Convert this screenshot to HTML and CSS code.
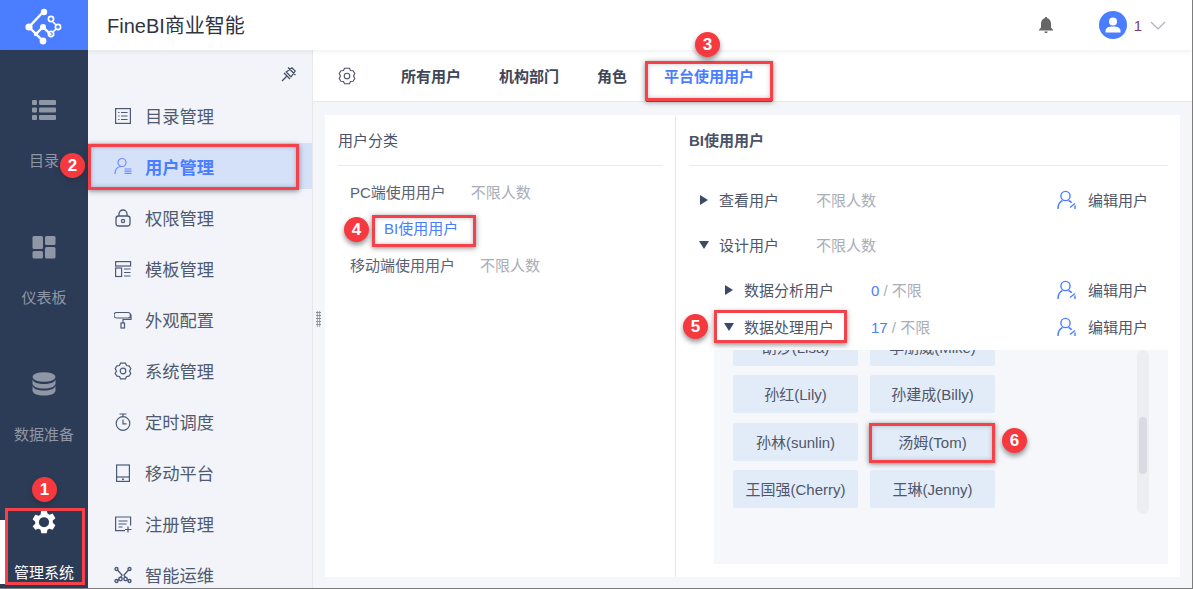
FILE: index.html
```html
<!DOCTYPE html>
<html lang="zh">
<head>
<meta charset="utf-8">
<title>FineBI商业智能</title>
<link rel="stylesheet" href="styles.css">
</head>
<body>
<div class="page">
  <header class="topbar">
    <div class="logo">
      <svg width="44" height="44" viewBox="0 0 44 44" class="logo-svg">
        <g fill="none" stroke="#fff" stroke-width="2.4">
          <path d="M22 6 7 22l14 14M14 29l7-7 8 8"/>
        </g>
        <g fill="#fff"><circle cx="22" cy="7" r="3.2"/><circle cx="7" cy="22" r="3.6"/><circle cx="21" cy="22" r="3"/><circle cx="21" cy="36" r="3.4"/><circle cx="14" cy="29" r="2.2"/></g>
        <g fill="none" stroke="#fff" stroke-width="1.7"><path d="M31 17l3 3M31 27l3-3"/><circle cx="29" cy="14" r="2.6"/><circle cx="36" cy="22" r="2.6"/><circle cx="29" cy="29" r="2.6"/></g>
      </svg>
    </div>
    <div class="brand">FineBI商业智能</div>
    <div class="top-actions">
      <svg class="bell" width="16" height="18" viewBox="0 0 16 18"><path fill="#666" d="M8 1c.8 0 1.2.5 1.3 1.2C12 3 13 5.200 13 8v3.500l2 2.200v.8H1v-.8l2-2.200V8c0-2.800 1-5 3.700-5.800C6.800 1.500 7.200 1 8 1zM6.300 15.500h3.400C9.600 16.500 8.900 17 8 17s-1.600-.5-1.700-1.500z"/></svg>
      <span class="avatar"><svg width="18" height="18" viewBox="0 0 18 18"><circle cx="9" cy="5.500" r="4" fill="#fff"/><path fill="#fff" d="M1.500 16.500v-1.800c0-2.700 3-4.200 7.500-4.200s7.500 1.500 7.500 4.200v1.800z"/></svg></span>
      <span class="user-id">1</span>
      <svg class="chev" width="16" height="9" viewBox="0 0 16 9"><path d="M1 1l7 7 7-7" fill="none" stroke="#aeb1b8" stroke-width="1.200"/></svg>
    </div>
  </header>

  <div class="body">
    <nav class="rail">
      <div class="rail-item">
        <svg width="24" height="24" viewBox="0 0 24 24" class="rail-ico"><g fill="currentColor"><rect y="2" width="5" height="5" rx="1"/><rect x="7" y="2" width="17" height="5" rx="1"/><rect y="9.500" width="5" height="5" rx="1"/><rect x="7" y="9.500" width="17" height="5" rx="1"/><rect y="17" width="5" height="5" rx="1"/><rect x="7" y="17" width="17" height="5" rx="1"/></g></svg>
        <span class="rail-label">目录</span>
      </div>
      <div class="rail-item">
        <svg width="24" height="24" viewBox="0 0 24 24" class="rail-ico"><g fill="currentColor"><rect x="0.500" y="1" width="10.500" height="13" rx="1.500"/><rect x="13" y="1" width="10.500" height="9" rx="1.500"/><rect x="0.500" y="16" width="10.500" height="7.500" rx="1.500"/><rect x="13" y="12" width="10.500" height="11.500" rx="1.500"/></g></svg>
        <span class="rail-label">仪表板</span>
      </div>
      <div class="rail-item">
        <svg width="24" height="24" viewBox="0 0 24 24" class="rail-ico"><g fill="currentColor"><ellipse cx="12" cy="5" rx="11.500" ry="4.800"/><path d="M.5 7.500c1 3 5.500 4.500 11.500 4.500s10.500-1.500 11.500-4.500v4c0 3-5 5-11.500 5S.5 14.500.5 11.500z"/><path d="M.5 14c1 3 5.500 4.500 11.500 4.500S22.500 17 23.500 14v4.500c0 3-5 5-11.500 5S.5 21.500.5 18.500z"/></g></svg>
        <span class="rail-label">数据准备</span>
      </div>
      <div class="rail-item is-active">
        <svg width="26" height="26" viewBox="0 0 24 24" class="rail-ico gear-white"><path fill="currentColor" fill-rule="evenodd" d="M9.500 1h5l.7 3.200 1.700 1 3.100-1 2.500 4.300-2.400 2.200v2l2.400 2.200-2.500 4.300-3.100-1-1.700 1-.7 3.200h-5l-.7-3.200-1.700-1-3.100 1L1.500 15.900l2.400-2.200v-2L1.500 9.500 4 5.200l3.100 1 1.700-1zM12 7.500a4.700 4.700 0 1 0 0 9.400 4.700 4.700 0 0 0 0-9.400z"/></svg>
        <span class="rail-label">管理系统</span>
      </div>
    </nav>

    <aside class="side">
      <div class="pin-row">
        <svg width="18" height="18" viewBox="0 0 18 18"><g fill="none" stroke="#3f4a5e" stroke-width="1.200"><path d="M8 2.500l7.500 7.500M12 2.800 15.200 6 11 11.800 6.200 7z"/><path d="M4 8l6 6M6.500 11.500 2 16"/></g></svg>
      </div>
      <ul class="menu">
        <li class="menu-item"><svg class="mi" width="18" height="18" viewBox="0 0 18 18"><g fill="none" stroke="currentColor" stroke-width="1.200"><rect x="1.600" y="1.600" width="14.800" height="14.800"/><path d="M7 5.500h6.500M7 9h6.500M7 12.500h6.500M4.200 5.500h1.300M4.200 9h1.300M4.200 12.500h1.300"/></g></svg>目录管理</li>
        <li class="menu-item is-active"><svg class="mi" width="18" height="18" viewBox="0 0 18 18"><g fill="none" stroke="currentColor" stroke-width="1.200"><circle cx="8" cy="5.500" r="4"/><path d="M1 17c0-4.500 2.500-7.200 6-7.500M10.500 12h7M10.500 14.200h7M10.500 16.400h7"/></g></svg>用户管理</li>
        <li class="menu-item"><svg class="mi" width="18" height="18" viewBox="0 0 18 18"><g fill="none" stroke="currentColor" stroke-width="1.300"><rect x="2" y="7" width="14" height="10" rx="2.500"/><path d="M5 7V5a4 4 0 0 1 8 0v2"/><circle cx="9" cy="12" r="1.600"/></g></svg>权限管理</li>
        <li class="menu-item"><svg class="mi" width="18" height="18" viewBox="0 0 18 18"><g fill="none" stroke="currentColor" stroke-width="1.200"><rect x="1.600" y="1.600" width="15" height="4.400"/><rect x="1.600" y="8" width="6" height="8.500"/><path d="M10 9h6.500M10 12.500h6.500M10 16h6.500"/></g></svg>模板管理</li>
        <li class="menu-item"><svg class="mi" width="18" height="18" viewBox="0 0 18 18"><g fill="none" stroke="currentColor" stroke-width="1.200"><path d="M2.500 1.500h11.500a1.500 1.500 0 0 1 0 5.500H3a1.500 1.500 0 0 1-.5-5.500zM15.500 4h1.500v4.500H9V12"/><rect x="7" y="12" width="3.500" height="5"/></g></svg>外观配置</li>
        <li class="menu-item"><svg class="mi" width="18" height="18" viewBox="0 0 18 18"><g fill="none" stroke="currentColor" stroke-width="1.200"><path d="M6.500 1.200h5l1 2.300 2.500.3 1.800 2.700-1.300 2.500 1.300 2.500-1.800 2.700-2.500.3-1 2.300h-5l-1-2.300-2.500-.3L1.200 11.500 2.500 9 1.200 6.500 3 3.800l2.500-.3z"/><circle cx="9" cy="9" r="2.800"/></g></svg>系统管理</li>
        <li class="menu-item"><svg class="mi" width="18" height="18" viewBox="0 0 18 18"><g fill="none" stroke="currentColor" stroke-width="1.200"><circle cx="9" cy="10.500" r="6.800"/><path d="M5.500 1h7M9 1v2.700M9 6.500v4.300h3.500"/></g></svg>定时调度</li>
        <li class="menu-item"><svg class="mi" width="18" height="18" viewBox="0 0 18 18"><g fill="none" stroke="currentColor" stroke-width="1.200"><rect x="2.600" y="1" width="12.800" height="16.400"/><path d="M2.600 13h12.800"/></g><circle cx="9" cy="15.200" r="1" fill="currentColor"/></svg>移动平台</li>
        <li class="menu-item"><svg class="mi" width="18" height="18" viewBox="0 0 18 18"><g fill="none" stroke="currentColor" stroke-width="1.200"><path d="M11 15.600H1.600V2h15v8.500M4.500 6h9M4.500 9h8M4.500 12h4M14 11.500v6M11 14.500h6.500"/></g></svg>注册管理</li>
        <li class="menu-item"><svg class="mi" width="18" height="18" viewBox="0 0 18 18"><g fill="none" stroke="currentColor" stroke-width="1.400"><circle cx="2.500" cy="3" r="1.500"/><circle cx="15.500" cy="3" r="1.500"/><circle cx="2.500" cy="15" r="1.500"/><circle cx="15.500" cy="15" r="1.500"/><circle cx="6.500" cy="13" r="1.700"/><circle cx="11.500" cy="13" r="1.700"/><path d="M3.500 4l4.500 5-1.200 2.500M14.500 4 10 9l1.200 2.500M3.500 14l1.500-.7M14.500 14l-1.500-.7"/></g></svg>智能运维</li>
      </ul>
    </aside>

    <main class="main">
      <div class="tabs">
        <svg class="tab-gear" width="18" height="18" viewBox="0 0 18 18"><g fill="none" stroke="#4a5268" stroke-width="1.100"><path d="M6.500 1.200h5l1 2.300 2.500.3 1.800 2.700-1.300 2.500 1.300 2.500-1.800 2.700-2.500.3-1 2.300h-5l-1-2.300-2.500-.3L1.200 11.500 2.500 9 1.200 6.500 3 3.800l2.500-.3z"/><circle cx="9" cy="9" r="2.800"/></g></svg>
        <span class="tab">所有用户</span>
        <span class="tab">机构部门</span>
        <span class="tab">角色</span>
        <span class="tab is-active">平台使用用户</span>
      </div>
      <div class="content">
        <section class="card card-left">
          <h2 class="card-title">用户分类</h2>
          <ul class="cat-list">
            <li class="cat"><span>PC端使用用户</span><span class="muted">不限人数</span></li>
            <li class="cat is-active"><span>BI使用用户</span></li>
            <li class="cat"><span>移动端使用用户</span><span class="muted">不限人数</span></li>
          </ul>
        </section>
        <section class="card card-right">
          <h2 class="card-title strong">BI使用用户</h2>
          <div class="rows">
            <div class="row"><i class="caret right"></i><span class="row-label">查看用户</span><span class="muted">不限人数</span><span class="edit"><svg width="20" height="20" viewBox="0 0 20 20"><use href="#edit-user"/></svg>编辑用户</span></div>
            <div class="row"><i class="caret down"></i><span class="row-label">设计用户</span><span class="muted">不限人数</span></div>
            <div class="row sub"><i class="caret right"></i><span class="row-label">数据分析用户</span><span class="muted"><b class="num">0</b> / 不限</span><span class="edit"><svg width="20" height="20" viewBox="0 0 20 20"><use href="#edit-user"/></svg>编辑用户</span></div>
            <div class="row sub last"><i class="caret down"></i><span class="row-label">数据处理用户</span><span class="muted"><b class="num">17</b> / 不限</span><span class="edit"><svg width="20" height="20" viewBox="0 0 20 20"><use href="#edit-user"/></svg>编辑用户</span></div>
          </div>
          <div class="chip-panel">
            <div class="chips">
              <span class="chip">胡莎(Lisa)</span><span class="chip">李朋威(Mike)</span>
              <span class="chip">孙红(Lily)</span><span class="chip">孙建成(Billy)</span>
              <span class="chip">孙林(sunlin)</span><span class="chip">汤姆(Tom)</span>
              <span class="chip">王国强(Cherry)</span><span class="chip">王琳(Jenny)</span>
            </div>
            <div class="scroll-track"><div class="scroll-thumb"></div></div>
          </div>
        </section>
      </div>
    </main>
  </div>

  <svg class="defs" width="0" height="0"><defs><g id="edit-user" fill="none" stroke="#4a7dff" stroke-width="1.400"><circle cx="8.500" cy="6" r="4.600"/><path d="M1 19c0-4.500 1.800-7.300 4.500-8.500M11.500 10.500c1.200.5 2.400 1.300 3.200 2.300M13 17.500l5-4M18 15.500V19"/></g></defs></svg>

  <div class="grip"></div>
  <div class="edge-patch"></div>
  <div class="mark mark-1"></div>
  <div class="mark mark-2"></div>
  <div class="mark mark-3"></div>
  <div class="mark mark-4"></div>
  <div class="mark mark-5"></div>
  <div class="mark mark-6"></div>
  <span class="badge badge-1">1</span>
  <span class="badge badge-2">2</span>
  <span class="badge badge-3">3</span>
  <span class="badge badge-4">4</span>
  <span class="badge badge-5">5</span>
  <span class="badge badge-6">6</span>
</div>
</body>
</html>
```
FILE: styles.css
```css
* { box-sizing: border-box; }
html, body { margin: 0; padding: 0; }
body {
  font-family: "Liberation Sans", "Noto Sans CJK SC", sans-serif;
  color: #4a5268;
  font-size: 15px;
}
ul { list-style: none; margin: 0; padding: 0; }
h2 { margin: 0; font-weight: 400; }

.page {
  position: relative;
  width: 1193px;
  height: 589px;
  overflow: hidden;
  background: #f5f6f9;
  display: flex;
  flex-direction: column;
  border-right: 1px solid #7d7d7d;
  border-bottom: 1px solid #7d7d7d;
}
.defs { position: absolute; }

.topbar {
  height: 50px;
  flex: none;
  display: flex;
  align-items: center;
  background: #fff;
  box-shadow: 0 2px 4px rgba(60, 70, 90, .07);
  position: relative;
  z-index: 2;
}
.logo {
  width: 88px;
  height: 50px;
  background: #4a7dff;
  display: flex;
  align-items: center;
  justify-content: center;
}
.logo-svg { margin-top: 3px; }
.brand {
  margin-left: 19px;
  padding-bottom: 1px;
  font-size: 20px;
  color: #2f3440;
}
.top-actions {
  margin-left: auto;
  display: flex;
  align-items: center;
  padding-right: 26px;
}
.bell { margin-right: 45px; }
.avatar {
  width: 28px;
  height: 28px;
  border-radius: 50%;
  background: #4a7dff;
  display: flex;
  align-items: center;
  justify-content: center;
  margin-right: 7px;
}
.user-id { color: #7a3f78; font-size: 15px; margin-right: 8px; }

.body { flex: 1; display: flex; min-height: 0; }

.rail {
  width: 88px;
  flex: none;
  background: #2c3c57;
  display: flex;
  flex-direction: column;
}
.rail-item {
  height: 137px;
  flex: none;
  padding-top: 48px;
  display: flex;
  flex-direction: column;
  align-items: center;
  color: #8f96a5;
}
.rail-ico { display: block; flex: none; }
.rail-label { margin-top: 27px; font-size: 15px; line-height: 24px; white-space: nowrap; }
.rail-item.is-active { color: #fff; padding-top: 48px; }
.rail-item.is-active .rail-label { margin-top: 26px; }

.side {
  width: 225px;
  flex: none;
  background: #f2f4f9;
  border-right: 1px solid #e6e8ee;
  overflow: hidden;
}
.pin-row {
  height: 40px;
  display: flex;
  justify-content: flex-end;
  align-items: flex-end;
  padding: 0 14px 7px 0;
}
.menu-item {
  height: 51px;
  padding-left: 26px;
  display: flex;
  align-items: center;
  font-size: 17.300px;
  color: #4f5a70;
  white-space: nowrap;
}
.mi { margin-right: 13px; flex: none; color: #4a5a78; }
.menu-item.is-active {
  height: 46px;
  margin: 2px 0 3px;
  background: #d5e1f8;
  color: #4a7dff;
  font-weight: 700;
}
.menu-item.is-active .mi { color: #6f8cff; }

.main { flex: 1; min-width: 0; display: flex; flex-direction: column; }
.tabs {
  height: 52px;
  flex: none;
  background: #fff;
  border-bottom: 1px solid #e6e8ee;
  display: flex;
  align-items: center;
  padding-left: 25px;
  font-size: 15px;
  font-weight: 700;
  color: #3e4658;
}
.tab-gear { margin-right: 45px; }
.tab { margin-right: 38px; white-space: nowrap; }
.tab.is-active {
  align-self: stretch;
  display: flex;
  align-items: center;
  margin: 0 0 0 -19px;
  padding: 0 18px;
  color: #4a7dff;
  box-shadow: 0 1px 0 #3f6fe0;
}
.content {
  flex: 1;
  min-height: 0;
  display: flex;
  padding: 13px 12px 11px 12px;
}
.card { background: #fff; }
.card-left { width: 351px; padding: 0 12px 0 13px; border-right: 1px solid #e6e8ee; flex: none; }
.card-right { flex: 1; min-width: 0; padding: 0 12px 0 13px; }
.card-title {
  height: 51px;
  padding-top: 1px;
  line-height: 50px;
  font-size: 15px;
  color: #4a5268;
  border-bottom: 1px solid #e8eaee;
}
.card-title.strong { font-weight: 700; }
.muted { color: #a8adb8; white-space: nowrap; }

.cat-list { padding: 7px 0 0 12px; }
.cat { height: 36.500px; display: flex; align-items: center; gap: 25px; font-size: 15px; color: #5a6274; }
.cat.is-active { color: #4a7dff; padding-left: 34px; }

.rows { padding-top: 11px; }
.row {
  height: 45px;
  display: flex;
  align-items: center;
  padding-left: 10px;
  font-size: 15px;
  color: #4f5669;
}
.row.sub { padding-left: 35px; }
.row.last { height: 29px; margin-bottom: 9px; }
.caret { width: 0; height: 0; flex: none; margin-right: 11px; border-style: solid; border-color: transparent; }
.caret.right { border-width: 5.500px 0 5.500px 8px; border-left-color: #3d4a66; margin-left: 1px; }
.caret.down { border-width: 8px 5.500px 0 5.500px; border-top-color: #3d4a66; margin-right: 10px; }
.row-label { width: 97px; flex: none; white-space: nowrap; }
.row.sub .row-label { width: 127px; }
.num { color: #4a7dff; font-weight: 400; }
.edit {
  margin-left: auto;
  margin-right: 20px;
  display: flex;
  align-items: center;
  gap: 11px;
  white-space: nowrap;
}

.chip-panel {
  position: relative;
  margin-left: 25px;
  height: 214px;
  background: #f6f7fa;
  overflow: hidden;
}
.chips {
  display: grid;
  grid-template-columns: 125px 125px;
  grid-auto-rows: 38px;
  column-gap: 12px;
  row-gap: 9.500px;
  padding-left: 19px;
  margin-top: -22.500px;
}
.chip {
  background: #e2ecf9;
  border-radius: 2px;
  padding-bottom: 1px;
  display: flex;
  align-items: center;
  justify-content: center;
  font-size: 15px;
  color: #4f5669;
  white-space: nowrap;
}
.scroll-track {
  position: absolute;
  right: 19px;
  top: 0;
  width: 12px;
  height: 164px;
  border-radius: 6px;
  background: #eceef2;
}
.scroll-thumb {
  position: absolute;
  left: 2px;
  top: 67px;
  width: 8px;
  height: 57px;
  border-radius: 4px;
  background: #d8dbe1;
}

.grip {
  position: absolute;
  left: 316px;
  top: 311px;
  width: 5px;
  height: 16px;
  background-image: radial-gradient(circle, #8a8f99 1px, transparent 1.100px);
  background-size: 2.500px 3px;
}
.edge-patch {
  position: absolute;
  left: 0;
  top: 520px;
  width: 5px;
  height: 64px;
  background: #fff;
}
.mark {
  position: absolute;
  z-index: 3;
  border: 3px solid #f5424a;
  box-shadow: 0 1px 5px rgba(40, 40, 50, .55), inset 0 0 4px rgba(40, 40, 50, .3);
}
.mark-1 { left: 5px; top: 508px; width: 80px; height: 77px; box-shadow: none; }
.mark-2 { left: 88px; top: 144px; width: 211px; height: 46px; }
.mark-3 { left: 645px; top: 61px; width: 128px; height: 40px; }
.mark-4 { left: 372px; top: 215px; width: 104px; height: 32px; }
.mark-5 { left: 714px; top: 310px; width: 133px; height: 33px; box-shadow: 0 2px 5px rgba(40, 40, 50, .5); }
.mark-6 { left: 869px; top: 423px; width: 126px; height: 40px; }
.badge {
  position: absolute;
  z-index: 4;
  width: 25px;
  height: 25px;
  border-radius: 50%;
  background: #f5393f;
  color: #fff;
  font-size: 17px;
  font-weight: 700;
  line-height: 25px;
  text-align: center;
  box-shadow: 0 3px 5px rgba(40, 40, 50, .5);
}
.badge-1 { left: 32px; top: 477px; }
.badge-2 { left: 60px; top: 153px; }
.badge-3 { left: 695px; top: 32px; }
.badge-4 { left: 344px; top: 217px; }
.badge-5 { left: 683px; top: 314px; }
.badge-6 { left: 1002px; top: 428px; }
```
